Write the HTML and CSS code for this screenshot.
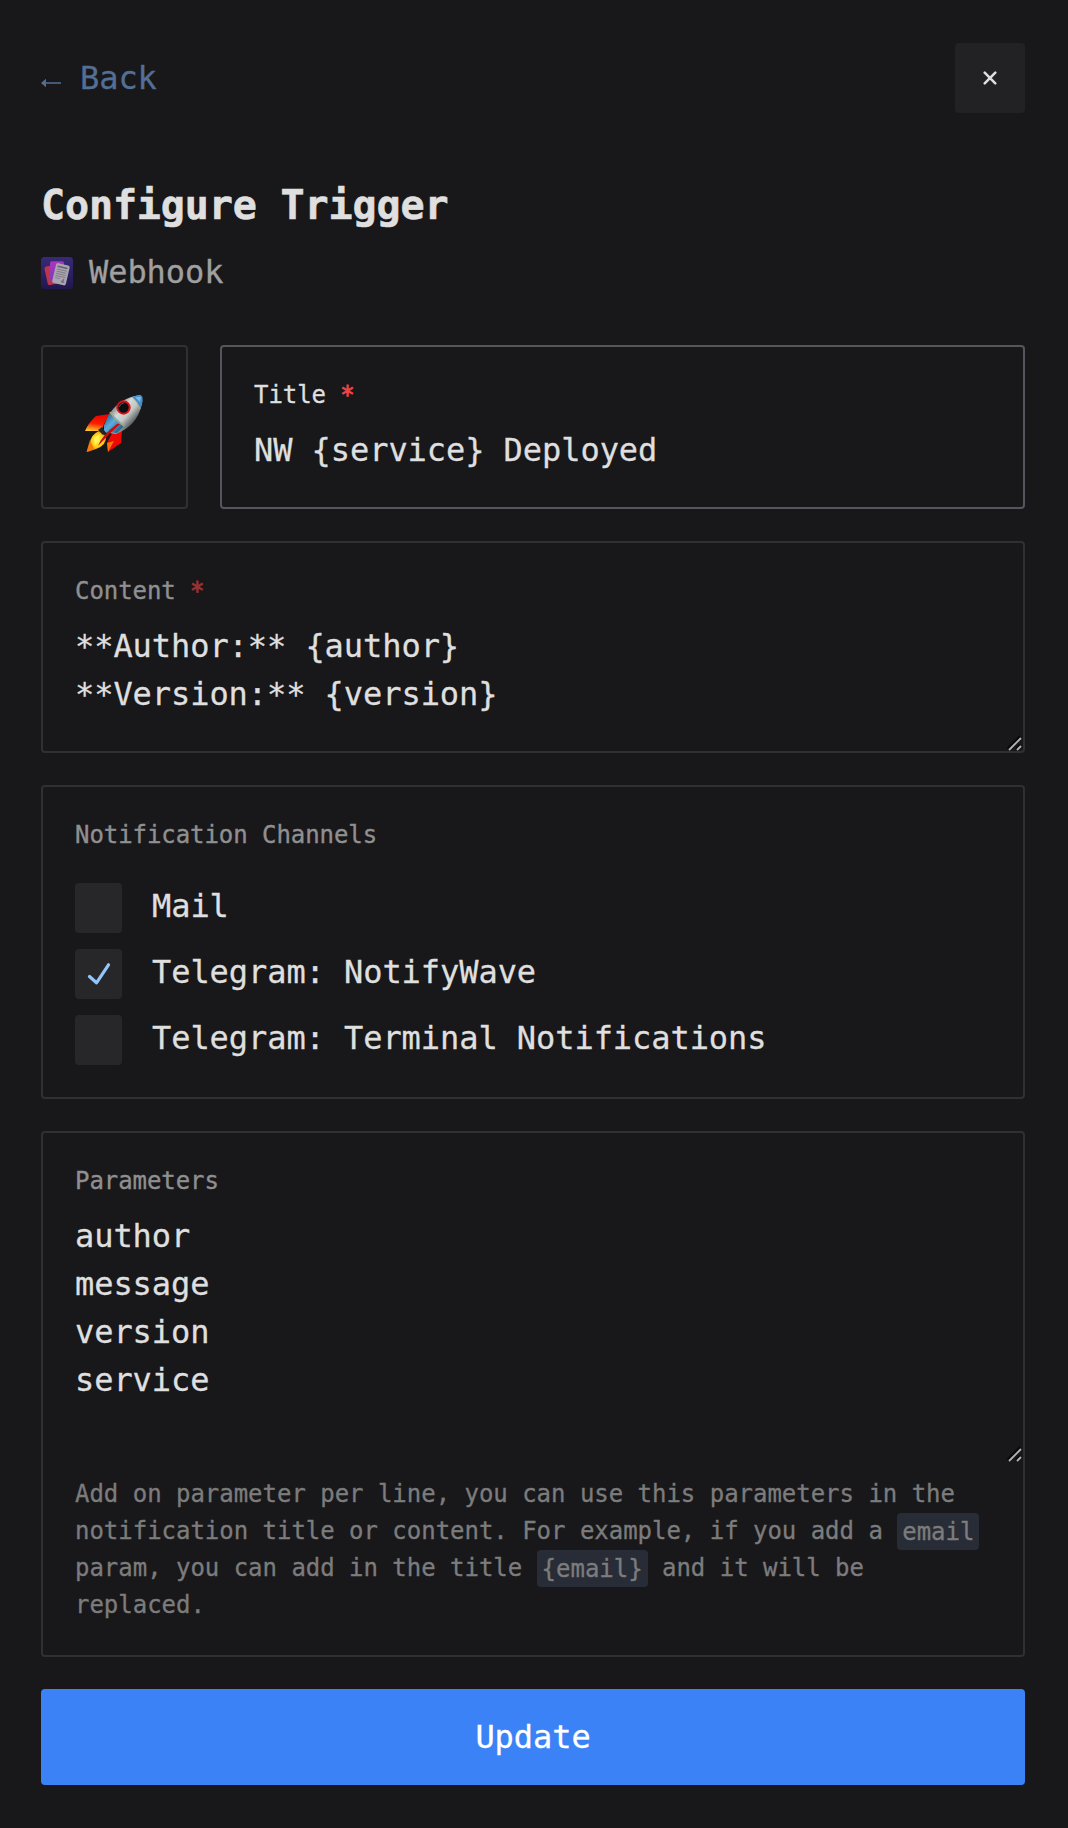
FILE: index.html
```html
<!DOCTYPE html>
<html lang="en">
<head>
<meta charset="utf-8">
<title>Configure Trigger</title>
<link rel="stylesheet" href="styles.css">
</head>
<body>
<main class="page">
  <header class="topbar">
    <a class="back">
      <svg class="back-arrow" width="20" height="10" viewBox="0 0 20 10"><path d="M3 5H20" stroke="currentColor" stroke-width="1.5"/><path d="M0 5 5 .7V3.8L4.2 5 5 6.2V9.3Z" fill="currentColor"/></svg>
      <span>Back</span>
    </a>
    <button class="close" aria-label="Close">
      <svg width="14" height="14" viewBox="0 0 14 14"><path d="M1.7 1.7 12.3 12.3M12.3 1.7 1.7 12.3" stroke="currentColor" stroke-width="2.5" stroke-linecap="round"/></svg>
    </button>
  </header>

  <h1 class="heading">Configure Trigger</h1>
  <div class="source">
    <svg width="32" height="32" viewBox="0 0 32 32">
      <defs>
        <linearGradient id="tile" x2="0" y2="1"><stop stop-color="#392a78"/><stop offset="1" stop-color="#20174f"/></linearGradient>
        <linearGradient id="pink" x2="0" y2="1"><stop stop-color="#a936bb"/><stop offset="1" stop-color="#7e3bb5"/></linearGradient>
      </defs>
      <rect width="32" height="32" rx="3.5" fill="url(#tile)"/>
      <rect x="5" y="8.5" width="12" height="19" rx="2" fill="#bd344d" transform="rotate(-12 11 18)"/>
      <rect x="9" y="4.3" width="14" height="20" rx="2" fill="url(#pink)"/>
      <g transform="rotate(13 20 17)">
        <rect x="13" y="7" width="14" height="20.5" rx="2" fill="#aaa5b1"/>
        <path d="M15 10.2h10" stroke="#65606f" stroke-width="1.4"/>
        <path d="M15 13h10M15 15.2h10M15 17.4h10M15 19.6h10M15 21.8h5" stroke="#79747f" stroke-width=".8"/>
        <path d="M22 24.5q2-5 2-2t-2 2h3" fill="none" stroke="#65606f" stroke-width=".8"/>
      </g>
    </svg>
    <span class="source-name">Webhook</span>
  </div>

  <form class="form">
    <div class="title-row">
      <div class="emoji">
        <svg width="58" height="58" viewBox="0 0 58 58">
          <defs>
            <linearGradient id="hull" x1="25" y1="13" x2="46" y2="32" gradientUnits="userSpaceOnUse"><stop stop-color="#6c7375"/><stop offset=".35" stop-color="#d6d9d6"/><stop offset=".62" stop-color="#c3c8c5"/><stop offset="1" stop-color="#454d4d"/></linearGradient>
            <linearGradient id="blue" x1="20" y1="20" x2="39" y2="38" gradientUnits="userSpaceOnUse"><stop stop-color="#235b83"/><stop offset=".4" stop-color="#5caee0"/><stop offset="1" stop-color="#174064"/></linearGradient>
            <linearGradient id="fin" x1=".5" x2=".3" y2="1"><stop stop-color="#e80500"/><stop offset=".55" stop-color="#fa1c00"/><stop offset="1" stop-color="#ffc62c"/></linearGradient>
            <radialGradient id="fire" cx=".55" cy=".45"><stop stop-color="#fff65a"/><stop offset=".6" stop-color="#ffcf18"/><stop offset="1" stop-color="#f58b08"/></radialGradient>
          </defs>
          <path d="M25 19 11 21Q4 27 0 36L16 36Q19 28 25 19Z" fill="url(#fin)"/>
          <path d="M27 38 37 35 36 48Q30 52 23 57L22 48Z" fill="#ee0a04"/>
          <path d="M22 48 29 46 23 57Z" fill="#f9740c"/>
          <path d="M14 36Q5 40 5 49L2 57 11 54Q22 50 21 41Z" fill="url(#fire)"/>
          <path d="M5 45 1.500 57 9 54" fill="#f47b0a"/>
          <path d="M9 43 15 39 10 51Z" fill="#fff45a"/>
          <path d="M25 18Q35 3 55 0 58 2 57 9 52 31 31 39L19 37 19 31Z" fill="url(#hull)"/>
          <path d="M25 17 39 31 32 38 19 37 19 31Z" fill="url(#blue)"/>
          <path d="M25 17Q31 26 39 31" fill="none" stroke="#c8ac5d" stroke-width="1.2"/>
          <path d="M47 2Q54 -1 57 1 59 5 55 14 53 7 47 2Z" fill="#438dc9"/>
          <path d="M50 2 56 2 55 7Z" fill="#7cbbe8"/>
          <path d="M47 2Q53 7 55 14" fill="none" stroke="#b6a878"/>
          <path d="M13 35 17 32 21 38 18 40Z" fill="#20272b"/>
          <path d="M35 29Q25 38 13 51 17 40 32 29Z" fill="#c90c08"/>
          <circle cx="38.500" cy="12.500" r="6.200" fill="#0c0f12" stroke="#dc1118" stroke-width="2"/>
          <path d="M34 12q2-4 5-4" stroke="#505960" fill="none"/>
        </svg>
      </div>
      <div class="field field-active">
        <div class="label">Title <span class="required">*</span></div>
        <div class="value">NW {service} Deployed</div>
      </div>
    </div>

    <div class="field field-content">
      <div class="label"><span class="dim">Content <span class="required">*</span></span></div>
      <div class="value">**Author:** {author}
**Version:** {version}</div>
      <svg class="grip" width="16" height="16" viewBox="0 0 16 16"><path d="M2 14 14.500 1.500M10.500 14 14.500 10" stroke="#08080a" stroke-width="3.500"/><path d="M3 15 15 3M11 15 15 11" stroke="#b4b4b4" stroke-width="1.800"/></svg>
    </div>

    <div class="field field-channels">
      <div class="label"><span class="dim">Notification Channels</span></div>
      <div class="channel"><span class="box"></span><span class="channel-name">Mail</span></div>
      <div class="channel">
        <span class="box"><svg width="24" height="24" viewBox="0 0 24 24"><path d="M2.500 14.500 9.500 20.800 21.500 2.800" fill="none" stroke="#93c5fd" stroke-width="3.200" stroke-linecap="round" stroke-linejoin="round"/></svg></span>
        <span class="channel-name">Telegram: NotifyWave</span>
      </div>
      <div class="channel"><span class="box"></span><span class="channel-name">Telegram: Terminal Notifications</span></div>
    </div>

    <div class="field field-params">
      <div class="label"><span class="dim">Parameters</span></div>
      <div class="params">
        <div class="value">author
message
version
service</div>
        <svg class="grip" width="16" height="16" viewBox="0 0 16 16"><path d="M2 14 14.500 1.500M10.500 14 14.500 10" stroke="#08080a" stroke-width="3.500"/><path d="M3 15 15 3M11 15 15 11" stroke="#b4b4b4" stroke-width="1.800"/></svg>
      </div>
      <p class="help">Add on parameter per line, you can use this parameters in the<br>notification title or content. For example, if you add a <code>email</code><br>param, you can add in the title <code>{email}</code> and it will be<br>replaced.</p>
    </div>

    <button class="submit" type="button">Update</button>
  </form>
</main>
</body>
</html>
```
FILE: styles.css
```css
* {
  box-sizing: border-box;
}

body {
  margin: 0;
  background: #18181b;
  color: #dfdfdf;
  font: 32px/48px "DejaVu Sans Mono", "Liberation Mono", monospace;
  letter-spacing: -0.002em;
  -webkit-text-stroke: 0.3px currentColor;
}

svg {
  display: block;
  flex: none;
}

.page {
  width: 1068px;
  height: 1828px;
  padding: 43px 43px 0 41px;
}

.topbar {
  display: flex;
  justify-content: space-between;
  height: 70px;
}

.back {
  display: flex;
  align-items: center;
  gap: 19px;
  height: 69px;
  color: #536f94;
}

.back-arrow {
  margin-top: 10px;
}

.close {
  display: flex;
  align-items: center;
  justify-content: center;
  width: 70px;
  height: 70px;
  padding: 0 0 1px;
  border: 0;
  border-radius: 4px;
  background: #222224;
  color: #dfdfdf;
}

.heading {
  margin: 67px 0 27px;
  font-size: 40px;
  line-height: 50px;
  letter-spacing: -0.003em;
  -webkit-text-stroke-width: 0.6px;
}

.source {
  display: flex;
  gap: 16px;
  height: 32px;
  color: #a0a0a0;
}

.source-name {
  line-height: 31px;
}

.form {
  display: flex;
  flex-direction: column;
  gap: 32px;
  margin-top: 56px;
}

.title-row {
  display: flex;
  gap: 32px;
  height: 164px;
}

.emoji {
  display: flex;
  align-items: center;
  justify-content: center;
  width: 147px;
  padding: 0 2px 6px 0;
  border: 2px solid #303032;
  border-radius: 4px;
}

.field {
  position: relative;
  padding: 30px 32px 32px;
  border: 2px solid #303032;
  border-radius: 4px;
}

.field-active {
  flex: 1;
  border-color: #55555e;
}

.field-content {
  height: 212px;
}

.field-channels {
  display: flex;
  flex-direction: column;
  gap: 16px;
  height: 314px;
}

.field-channels .label {
  margin-bottom: 14px;
}

.field-params {
  height: 526px;
}

.label {
  margin-bottom: 13px;
  font-size: 24px;
  line-height: 36px;
}

.dim {
  opacity: 0.6;
}

.required {
  color: #ef4444;
  -webkit-text-stroke: 0.8px #ef4444;
}

.value {
  white-space: pre;
}

.grip {
  position: absolute;
  right: 1px;
  bottom: 0;
}

.channel {
  display: flex;
  gap: 30px;
  height: 50px;
}

.channel-name {
  line-height: 47px;
}

.box {
  display: flex;
  align-items: center;
  justify-content: center;
  width: 47px;
  height: 50px;
  border-radius: 4px;
  background: #272729;
}

.params {
  position: relative;
  height: 250px;
  margin-right: -32px;
}

.help {
  margin: 14px 0 0;
  color: #7c7c7c;
  font-size: 24px;
  line-height: 37px;
  letter-spacing: -0.001em;
  white-space: nowrap;
}

code {
  padding: 4.500px 5px;
  border-radius: 4px;
  background: #282c37;
  font: inherit;
}

.submit {
  height: 96px;
  padding: 0 0 1px;
  border: 0;
  border-radius: 4px;
  background: #3b82f6;
  color: #fff;
  font: inherit;
  letter-spacing: inherit;
}
```
